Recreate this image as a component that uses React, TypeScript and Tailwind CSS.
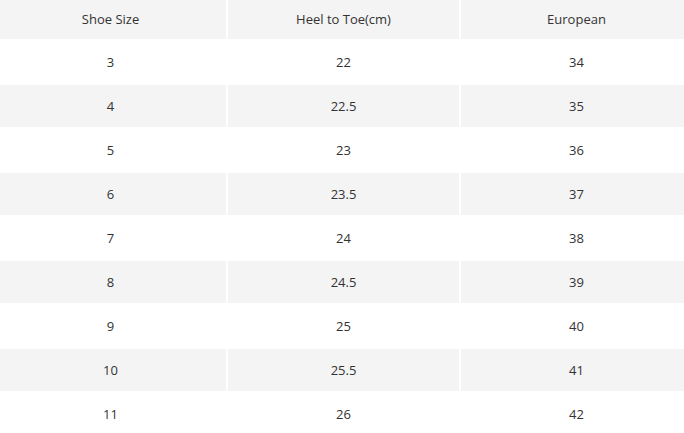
import React from "react";

const rows: [string, string, string][] = [
  ["3", "22", "34"],
  ["4", "22.5", "35"],
  ["5", "23", "36"],
  ["6", "23.5", "37"],
  ["7", "24", "38"],
  ["8", "24.5", "39"],
  ["9", "25", "40"],
  ["10", "25.5", "41"],
  ["11", "26", "42"],
];

export default function App() {
  return (
    <div
      className="w-[684px] h-[433px] overflow-hidden bg-white text-[13px] text-[#333]"
      style={{ fontFamily: '"Open Sans", "Noto Sans", sans-serif' }}
    >
      <div className="ml-[-5px] w-[697px] grid grid-cols-[231px_231px_231px] gap-[2px]">
        {["Shoe Size", "Heel to Toe(cm)", "European"].map((h) => (
          <div key={h} className="h-[39px] bg-[#f4f4f4] flex items-center justify-center">
            {h}
          </div>
        ))}
        {rows.map((r, i) =>
          r.map((c, j) => (
            <div
              key={`${i}-${j}`}
              className={
                i % 2 === 1
                  ? "h-[42px] pt-[1px] bg-[#f4f4f4] flex items-center justify-center"
                  : "h-[42px] pt-[1px] bg-white flex items-center justify-center"
              }
            >
              {c}
            </div>
          ))
        )}
      </div>
    </div>
  );
}
